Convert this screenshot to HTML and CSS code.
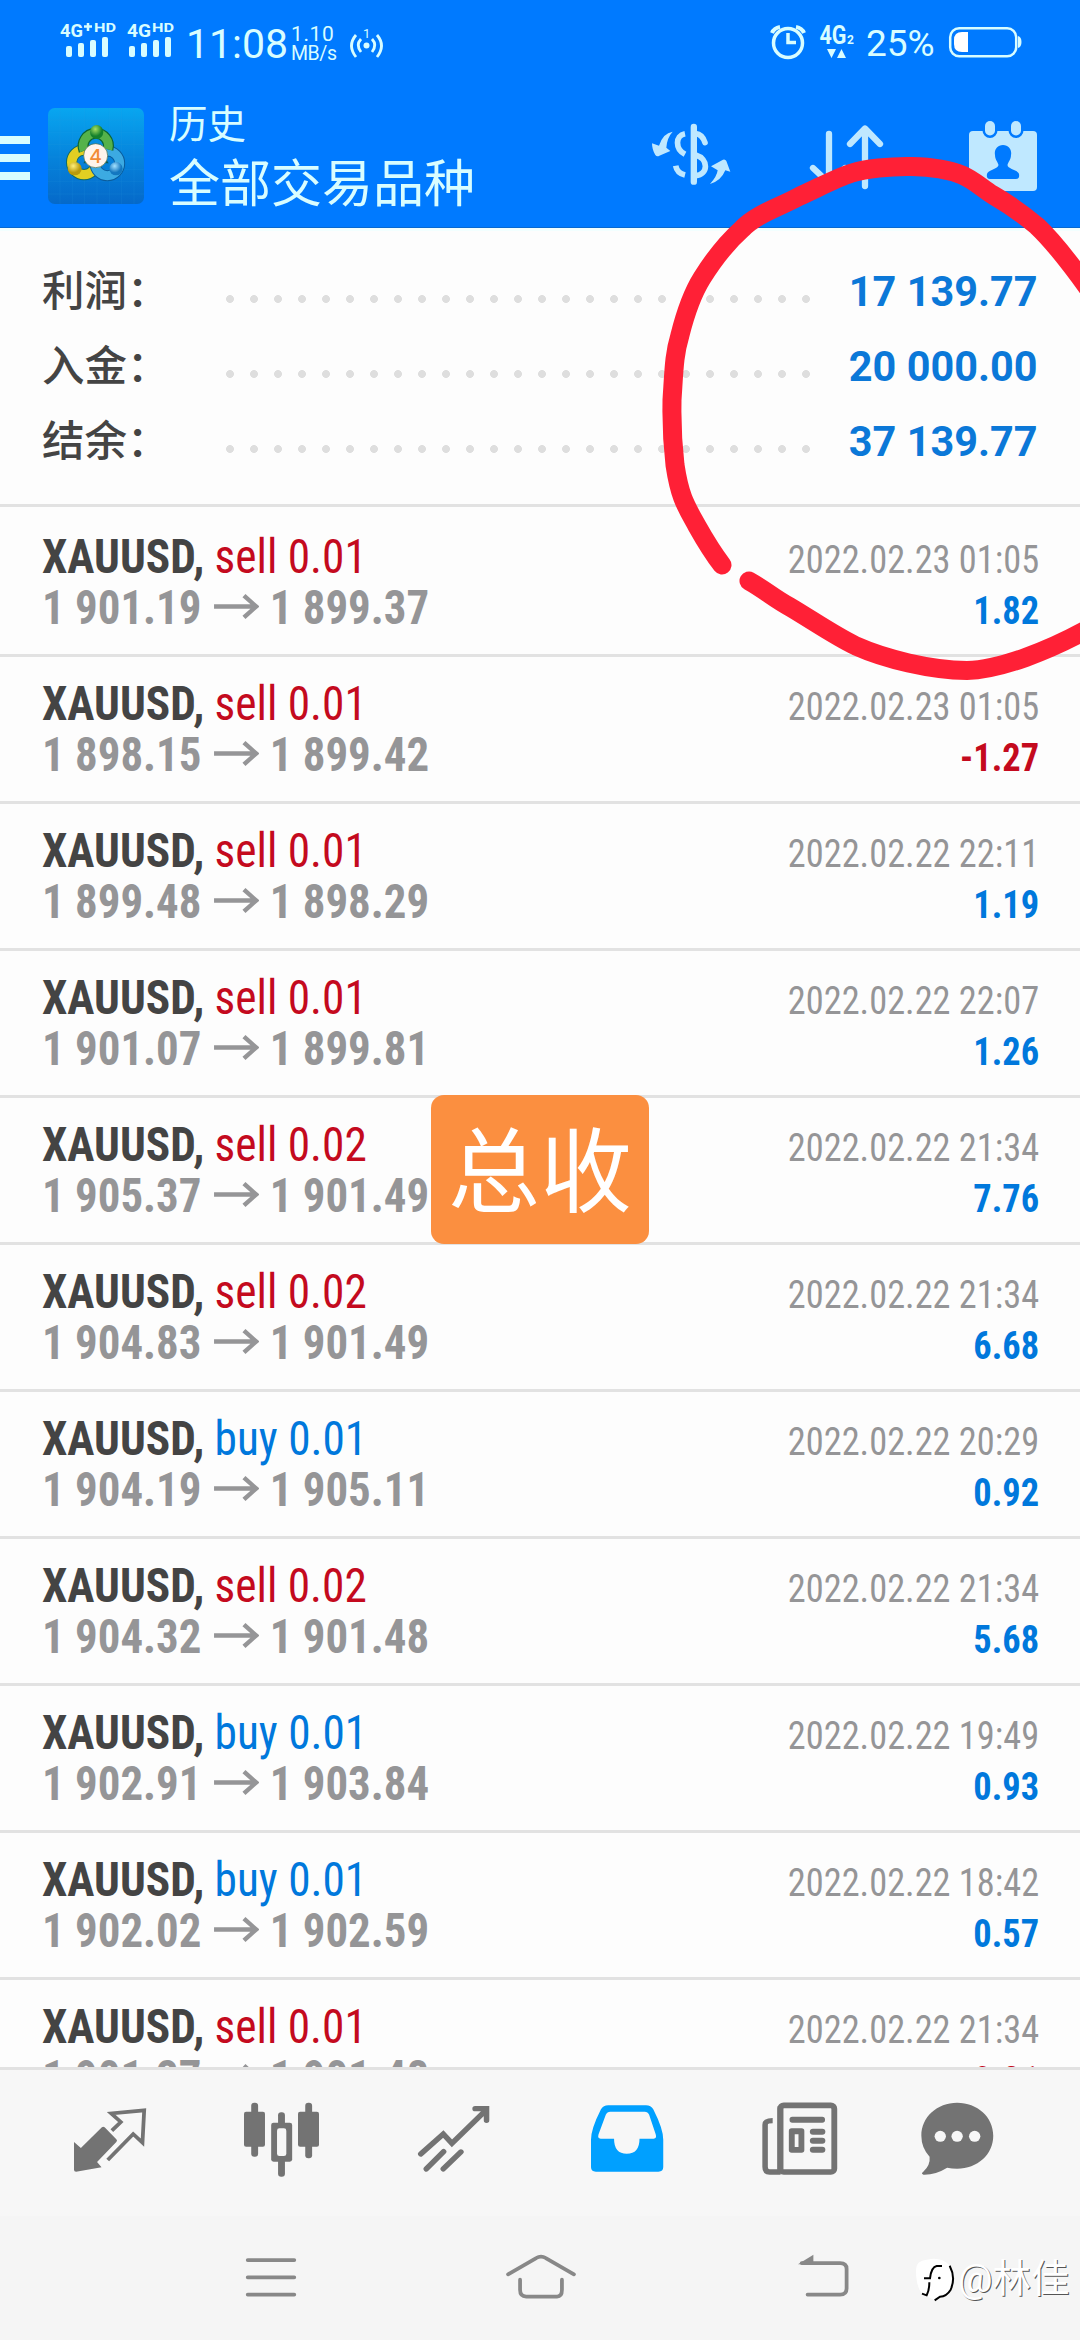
FILE: index.html
```
<!DOCTYPE html>
<html lang="zh-CN">
<head>
<meta charset="utf-8">
<title>历史</title>
<link rel="stylesheet" href="styles.css">
</head>
<body>
<svg class="defs" aria-hidden="true">
  <symbol id="arrow" viewBox="0 0 132 76" preserveAspectRatio="none"><path d="M0 38H120M88 5L124 38L88 71" fill="none" stroke="currentColor" stroke-width="13"/></symbol>
</svg>
<div class="screen">
  <header class="top">
    <div class="status">
      <svg class="sig" width="56" height="38" viewBox="60 21 56 38"><text class="net" x="60" y="37" font-size="19" textLength="23" lengthAdjust="spacingAndGlyphs">4G</text><path d="M84 26.500h8M88 23v8" stroke="currentColor" stroke-width="2.500"/><text class="net" x="94" y="32" font-size="13.500" textLength="22" lengthAdjust="spacingAndGlyphs">HD</text><g fill="currentColor"><rect x="66" y="46" width="6" height="11" rx="2"/><rect x="78" y="43" width="6" height="14" rx="2"/><rect x="90" y="40" width="6" height="17" rx="2"/><rect x="102" y="37" width="6" height="20" rx="2"/></g></svg>
      <svg class="sig two" width="47" height="38" viewBox="127 21 47 38"><text class="net" x="127" y="37" font-size="19" textLength="24" lengthAdjust="spacingAndGlyphs">4G</text><text class="net" x="152" y="32" font-size="13.500" textLength="22" lengthAdjust="spacingAndGlyphs">HD</text><g fill="currentColor"><rect x="129" y="46" width="6" height="11" rx="2"/><rect x="141" y="43" width="6" height="14" rx="2"/><rect x="153" y="40" width="6" height="17" rx="2"/><rect x="165" y="37" width="6" height="20" rx="2"/></g></svg>
      <span class="time">11:08</span>
      <span class="speed"><span>1.10</span><span>MB/s</span></span>
      <svg class="spot" width="34" height="34" viewBox="350 26 34 34"><g fill="none" stroke="currentColor" stroke-width="2.800"><path d="M356 35q-9 10.500 0 22M361 39q-5.500 6 0 13M377 35q9 10.500 0 22M372 39q5.500 6 0 13"/></g><circle cx="366.500" cy="45.500" r="3" fill="currentColor"/><text x="363" y="38" font-size="13" fill="currentColor">1</text></svg>
      <svg class="alarm" width="36" height="36" viewBox="769 24 36 36"><g fill="none" stroke="currentColor"><circle cx="787" cy="43" r="14.500" stroke-width="3.500"/><path d="M787 33v9.500h8" stroke-width="3.500"/><path d="M771 33q2-5 8-6M803 33q-2-5-8-6" stroke-width="4"/></g></svg>
      <svg class="data" width="35" height="35" viewBox="818 24 35 35"><text class="net" x="818.500" y="44" font-size="25" textLength="27" lengthAdjust="spacingAndGlyphs">4G</text><text class="net" x="846" y="44" font-size="12">2</text><path d="M826 49h9l-4.500 9zM836 58h9l-4.500-9z" fill="currentColor"/></svg>
      <span class="pct">25%</span>
      <svg class="bat" width="74" height="32" viewBox="947 26 74 32"><rect x="949.200" y="28.200" width="66" height="28" rx="9" fill="none" stroke="currentColor" stroke-width="2.500"/><path d="M967 32v20h-6q-8 0-8-8v-4q0-8 8-8z" fill="#fff"/><path d="M1017 36q3.500 1 3.500 6t-3.500 6z" fill="currentColor"/></svg>
    </div>
    <div class="bar">
      <div class="burger"><i></i><i></i><i></i></div>
      <svg class="logo" width="96" height="96" viewBox="24 24 288 288">
        <defs>
          <linearGradient id="bg" x1="0" y1="0" x2="0" y2="1"><stop offset="0" stop-color="#08a6f0"/><stop offset=".5" stop-color="#0684dc"/><stop offset="1" stop-color="#0569c9"/></linearGradient>
          <radialGradient id="gr" cx=".4" cy=".3"><stop offset="0" stop-color="#a6e063"/><stop offset="1" stop-color="#14802c"/></radialGradient>
          <radialGradient id="ye" cx=".4" cy=".3"><stop offset="0" stop-color="#fff07a"/><stop offset="1" stop-color="#b99a0c"/></radialGradient>
          <radialGradient id="bl" cx=".4" cy=".3"><stop offset="0" stop-color="#a4e2ff"/><stop offset="1" stop-color="#1377c0"/></radialGradient>
        </defs>
        <rect x="24" y="24" width="288" height="288" rx="20" fill="url(#bg)"/>
        <path d="M60 24v288M97 24v288M134 24v288M171 24v288M208 24v288M245 24v288M282 24v288M24 60h288M24 97h288M24 134h288M24 171h288M24 208h288M24 245h288M24 282h288" stroke="#2b9fe6" stroke-opacity=".22" stroke-width="2"/>
        <path d="M168 130L130 190L206 190z" fill="#0d5c5a"/>
        <g fill="none"><circle cx="132" cy="187" r="37" stroke="#126b62" stroke-width="34"/><circle cx="132" cy="187" r="37" stroke="#e2cf22" stroke-width="28"/><circle cx="202" cy="190" r="37" stroke="#0a5c9c" stroke-width="33"/><circle cx="202" cy="190" r="37" stroke="#3caae2" stroke-width="27"/><path d="M132 152A38 38 0 1 1 204 148" stroke="#0c6533" stroke-width="33"/><path d="M132 152A38 38 0 1 1 204 148" stroke="#55b24a" stroke-width="26"/></g>
        <ellipse cx="170" cy="96" rx="20" ry="21" fill="url(#gr)"/><ellipse cx="104" cy="206" rx="21" ry="20" fill="url(#ye)"/><ellipse cx="228" cy="206" rx="20" ry="20" fill="url(#bl)"/>
        <circle cx="167" cy="167" r="36" fill="#fff4ec" stroke="#4b6b45" stroke-width="2"/><text x="167" y="188" text-anchor="middle" font-family="Inter" font-weight="500" font-size="58" fill="#f28b36">4</text>
      </svg>
      <div class="titles"><span class="t1">历史</span><span class="t2">全部交易品种</span></div>
      <div class="actions">
        <svg width="80" height="63" viewBox="30 38 240 189"><g fill="none" stroke="currentColor" stroke-width="17"><path d="M132 70C102 76 102 116 132 132"/><path d="M104 166Q108 188 132 194" /><path d="M164 70Q184 72 192 97" stroke-linecap="round"/><path d="M164 134C204 146 202 192 164 196"/><path d="M158.500 50V214" stroke-width="19" stroke-linecap="round"/></g><path fill="currentColor" d="M95 64Q66 68 54 106L33 99Q33 118 43 134Q48 140 55 136L88 122L76 112Q78 82 95 64zM207 221Q228 198 230 180L210 168L246 148Q253 146 256 152L268 184L253 180Q240 212 207 221z"/></svg>
        <svg width="74" height="63" viewBox="808 124 74 63"><path d="M828 134V182M812 168L828 183L844 168M864 186V129M849 144L864 128.500L879 144" fill="none" stroke="currentColor" stroke-width="6.300" stroke-linecap="round" stroke-linejoin="round"/></svg>
        <svg width="68" height="70" viewBox="968 120 68 70"><rect x="968" y="130" width="68" height="60" rx="4" fill="currentColor"/><g fill="currentColor" stroke="#007aff" stroke-width="5" paint-order="stroke"><rect x="984" y="120" width="10" height="14.500" rx="5"/><rect x="1010" y="120" width="10" height="14.500" rx="5"/></g><path d="M1002 144c-6 0-9 5-8 10 0 5 3 7 3.500 10 0 4-11 5-11.500 9-.5 3 0 5 3 5h26c3 0 3.500-2 3-5-.5-4-11.500-5-11.500-9 .5-3 3.500-5 3.500-10 1-5-2-10-8-10z" fill="#007aff"/></svg>
      </div>
    </div>
  </header>

  <section class="summary">
    <div><span class="lab">利润：</span><i class="dots"></i><b>17 139.77</b></div>
    <div><span class="lab">入金：</span><i class="dots"></i><b>20 000.00</b></div>
    <div><span class="lab">结余：</span><i class="dots"></i><b>37 139.77</b></div>
  </section>

  <main class="deals">
    <div class="deal"><span class="l"><b>XAUUSD,</b> <em class="sell">sell 0.01</em></span><span class="date">2022.02.23 01:05</span><span class="l px">1 901.19<svg><use href="#arrow"/></svg>1 899.37</span><span class="pl">1.82</span></div>
    <div class="deal"><span class="l"><b>XAUUSD,</b> <em class="sell">sell 0.01</em></span><span class="date">2022.02.23 01:05</span><span class="l px">1 898.15<svg><use href="#arrow"/></svg>1 899.42</span><span class="pl neg">-1.27</span></div>
    <div class="deal"><span class="l"><b>XAUUSD,</b> <em class="sell">sell 0.01</em></span><span class="date">2022.02.22 22:11</span><span class="l px">1 899.48<svg><use href="#arrow"/></svg>1 898.29</span><span class="pl">1.19</span></div>
    <div class="deal"><span class="l"><b>XAUUSD,</b> <em class="sell">sell 0.01</em></span><span class="date">2022.02.22 22:07</span><span class="l px">1 901.07<svg><use href="#arrow"/></svg>1 899.81</span><span class="pl">1.26</span></div>
    <div class="deal"><span class="l"><b>XAUUSD,</b> <em class="sell">sell 0.02</em></span><span class="date">2022.02.22 21:34</span><span class="l px">1 905.37<svg><use href="#arrow"/></svg>1 901.49</span><span class="pl">7.76</span></div>
    <div class="deal"><span class="l"><b>XAUUSD,</b> <em class="sell">sell 0.02</em></span><span class="date">2022.02.22 21:34</span><span class="l px">1 904.83<svg><use href="#arrow"/></svg>1 901.49</span><span class="pl">6.68</span></div>
    <div class="deal"><span class="l"><b>XAUUSD,</b> <em class="buy">buy 0.01</em></span><span class="date">2022.02.22 20:29</span><span class="l px">1 904.19<svg><use href="#arrow"/></svg>1 905.11</span><span class="pl">0.92</span></div>
    <div class="deal"><span class="l"><b>XAUUSD,</b> <em class="sell">sell 0.02</em></span><span class="date">2022.02.22 21:34</span><span class="l px">1 904.32<svg><use href="#arrow"/></svg>1 901.48</span><span class="pl">5.68</span></div>
    <div class="deal"><span class="l"><b>XAUUSD,</b> <em class="buy">buy 0.01</em></span><span class="date">2022.02.22 19:49</span><span class="l px">1 902.91<svg><use href="#arrow"/></svg>1 903.84</span><span class="pl">0.93</span></div>
    <div class="deal"><span class="l"><b>XAUUSD,</b> <em class="buy">buy 0.01</em></span><span class="date">2022.02.22 18:42</span><span class="l px">1 902.02<svg><use href="#arrow"/></svg>1 902.59</span><span class="pl">0.57</span></div>
    <div class="deal"><span class="l"><b>XAUUSD,</b> <em class="sell">sell 0.01</em></span><span class="date">2022.02.22 21:34</span><span class="l px">1 901.27<svg><use href="#arrow"/></svg>1 901.48</span><span class="pl neg">-0.21</span></div>
  </main>

  <nav class="tabs">
    <svg width="72.600" height="73.300" viewBox="215 430 211 220" preserveAspectRatio="none"><path d="M296 503q4-4 8 0l34 36q4 4 0 8l-56 60 13 16-74 13q-6 0-6-6V547l20 18z" fill="currentColor"/><path d="M325 513l26-26-28-26 96-9-5 97-27-26-74 78" fill="none" stroke="currentColor" stroke-width="11"/></svg>
    <svg width="75" height="73.300" viewBox="708 430 218 220" preserveAspectRatio="none"><g fill="currentColor"><rect x="729" y="429" width="20" height="162" rx="9"/><rect x="708" y="456" width="61" height="105" rx="6"/><rect x="886" y="429" width="20" height="167" rx="9"/><rect x="865" y="456" width="61" height="105" rx="6"/><rect x="807" y="458" width="20" height="193" rx="9"/><rect x="787" y="489" width="61" height="117" rx="7"/></g><rect x="804" y="506" width="27" height="83" rx="7" fill="#f7f7f7"/></svg>
    <svg width="72" height="73.300" viewBox="1213 430 208 220" preserveAspectRatio="none"><path d="M1221 583L1286 523L1311 551L1408 453M1378 447H1411V482M1237 628L1287 576M1286 628L1337 577" fill="none" stroke="currentColor" stroke-width="16" stroke-linecap="round" stroke-linejoin="miter"/></svg>
    <svg class="on" width="72.600" height="73.300" viewBox="146 430 211 220" preserveAspectRatio="none"><path fill="currentColor" fill-rule="evenodd" d="M196 437H306Q320 437 327 449Q356 508 356 540V622Q356 636 342 636H160Q146 636 146 622V540Q146 508 175 449Q182 437 196 437zM202 456Q193 456 189 465L168 524Q164 537 174 537H213Q213 582 250 582Q287 582 287 537H328Q338 537 334 524L315 465Q311 456 302 456z"/></svg>
    <svg width="75.400" height="73.300" viewBox="646 430 219 220" preserveAspectRatio="none"><g fill="none" stroke="currentColor"><rect x="699" y="437" width="157" height="200" rx="10" stroke-width="17"/><path d="M677 483Q655 483 655 495V622Q655 637 668 637H700" stroke-width="16"/></g><rect x="691" y="440" width="17" height="200" fill="currentColor"/><g fill="currentColor"><rect x="726" y="471" width="103" height="18" rx="8"/><path fill-rule="evenodd" d="M732 506h29q8 0 8 8v57q0 8-8 8h-29q-8 0-8-8v-57q0-8 8-8zM741 524v38h11v-38z"/><rect x="785" y="507" width="45" height="18" rx="9"/><rect x="785" y="534" width="45" height="18" rx="9"/><rect x="785" y="561" width="45" height="18" rx="9"/></g></svg>
    <svg class="chat" width="72.600" height="73.300" viewBox="1108 430 211 220" preserveAspectRatio="none"><path fill="currentColor" d="M1213 429C1272 429 1318 472 1318 528S1272 627 1213 627Q1198 627 1184 624Q1150 646 1115 645Q1107 642 1114 637Q1136 616 1133 591Q1109 564 1109 528C1109 472 1155 429 1213 429z"/><g fill="#f7f7f7"><circle cx="1164" cy="530" r="16.500"/><circle cx="1213" cy="530" r="16.500"/><circle cx="1264" cy="530" r="16.500"/></g></svg>
  </nav>

  <footer class="sys">
    <svg width="50" height="44" viewBox="714 885 145 130" preserveAspectRatio="none"><path d="M719 900H854M719 951H854M719 1002H854" stroke="currentColor" stroke-width="11" stroke-linecap="round"/></svg>
    <svg class="home" width="70" height="44" viewBox="1469 885 204 130" preserveAspectRatio="none"><path d="M1475 942L1557 894Q1571 885 1585 894L1667 942M1510 958V988Q1510 1008 1528 1008H1618Q1632 1008 1632 988V958" fill="none" stroke="currentColor" stroke-width="11" stroke-linecap="round"/></svg>
    <svg width="51" height="44" viewBox="749 885 149 130" preserveAspectRatio="none"><path d="M760 909H872Q891 909 891 926V984Q891 1002 872 1002H777" fill="none" stroke="currentColor" stroke-width="11" stroke-linecap="round"/><path d="M749 912L794 884V912z" fill="currentColor"/></svg>
  </footer>

  <svg class="ink" width="1080" height="2340" viewBox="0 0 1080 2340"><path d="M722 565C712 552 706 542 697 526C686 506 680 498 675 465C671 430 672 415 672 400C674 370 674 355 680 335C685 315 692 294 702 278C712 262 724 245 742 229C756 214 780 207 800 196C818 188 836 178 852 173C865 169 890 166 912 166.500C935 167 950 170 962 175C974 180 983 189 993 195C1012 206 1025 216 1037 226C1055 243 1070 263 1088 288"/><path d="M749 581C765 590 775 599 790 607C812 620 835 636 856 646C885 659 930 670 967 670.500C1000 670 1050 650 1088 629"/></svg>
  <div class="badge">总收</div>
  <div class="mark"><svg width="42" height="46" viewBox="38 26 126 138"><path d="M44 66Q44 36 76 34Q118 24 144 50Q164 82 148 126Q134 148 100 156L76 144Q44 132 44 66z" fill="#fff"/><path d="M145 52Q164 88 148 124Q136 144 116 145L100 156" fill="none" stroke="#000" stroke-width="6"/><path d="M122 53H106Q90 56 86 90H68M84 102Q84 126 76 141L62 136" fill="none" stroke="#000" stroke-width="6"/><circle cx="114" cy="89" r="4" fill="#000"/></svg><span>@林佳</span></div>
</div>
</body>
</html>
```
FILE: styles.css
```
* { box-sizing: border-box; }
body { margin: 0; background: #fdfdfd; font-family: Roboto, "Noto Sans CJK SC", sans-serif; }
.defs { display: none; }
svg { display: block; flex: none; overflow: visible; }
.screen { position: relative; width: 1080px; height: 2340px; overflow: hidden; display: flex; flex-direction: column; }

.top { height: 228px; flex: none; background: #007aff; color: #d8fdff; display: flex; flex-direction: column; border-bottom: 1px solid #0869d0; }
.status { height: 84px; padding: 0 58px 0 60px; display: flex; align-items: center; }
.net { font-weight: 700; fill: currentColor; }
.sig { margin-top: -4px; }
.two { margin-left: 11px; }
.time { margin-left: 12px; width: 105px; font-size: 41px; line-height: 48px; margin-top: 5px; }
.speed { width: 47px; display: flex; flex-direction: column; font-size: 19.500px; line-height: 20px; margin-top: 4px; letter-spacing: -.4px; }
.speed span:first-child { font-size: 21px; letter-spacing: .6px; }
.spot { margin-left: 12px; margin-top: 2px; }
.alarm { margin-left: auto; }
.data { margin-left: 13px; }
.pct { margin-left: 12px; width: 82px; font-size: 37px; margin-top: 3px; white-space: nowrap; }
.bar { height: 144px; display: flex; padding-right: 43px; }
.burger { width: 30px; padding-top: 52px; display: flex; flex-direction: column; gap: 10px; }
.burger i { height: 8px; background: currentColor; }
.logo { margin: 24px 0 0 18px; }
.titles { margin-left: 25px; display: flex; flex-direction: column; }
.t1 { font-size: 38.500px; line-height: 48px; margin-top: 17px; }
.t2 { font-size: 51px; line-height: 62px; margin-top: 5px; }
.actions { margin-left: auto; display: flex; color: #bfe8ff; padding-top: 37px; }
.actions svg:nth-child(2) { margin: 3px 86px 0 78px; }
.actions svg:nth-child(1) { margin-top: 2px; }

.summary { height: 276px; flex: none; padding: 25px 42px 0 42px; border-top: 3px solid #f2ffff; }
.summary div { height: 75px; display: flex; align-items: center; }
.lab { width: 184px; font-size: 42.500px; font-weight: 500; color: #444; margin-top: -12px; }
.dots { height: 8px; width: 600px; margin-top: 11px; background: radial-gradient(circle at 4px 4px, #dedede 3.600px, transparent 4.200px) 0 0 / 24px 8px; }
.summary b { margin-left: auto; font-size: 42.500px; color: #0b78d8; margin-top: -5px; transform: scaleX(.975); transform-origin: 100% 50%; }

.deals { height: 1563px; flex: none; overflow: hidden; }
.deal { height: 147px; border-top: 3px solid #e2e2e2; padding: 21px 41px 0 42px; display: grid; grid-template-columns: 1fr auto; grid-template-rows: 51px 51px; align-items: baseline; font-stretch: 75%; font-size: 48px; line-height: 51px; white-space: nowrap; }
.deal:first-child { height: 150px; padding-top: 24px; }
.l { transform: scaleX(.944); transform-origin: 0 50%; color: #444; }
.l em { font-style: normal; }
.sell { color: #c40a1e; }
.buy { color: #0078dc; }
.px { color: #959597; font-weight: 700; transform: scaleX(.935); }
.px svg { display: inline-block; width: 48px; height: 25px; margin: 0 12px 0 13px; vertical-align: 5px; }
.date, .pl { font-size: 39.500px; text-align: right; transform: scaleX(.92); transform-origin: 100% 50%; }
.date { color: #959597; }
.pl { font-weight: 700; color: #0078dc; font-size: 39px; transform: scaleX(.935); }
.neg { color: #c40a1e; }

.tabs { height: 149px; flex: none; border-top: 3px solid #e2e2e2; background: #f7f7f7; color: #737373; display: flex; gap: 99px; padding: 33px 0 0 74px; }
.tabs .on { color: #00a0ff; }
.tabs svg:nth-child(2), .tabs svg:nth-child(3) { position: relative; left: -1.500px; }
.tabs .chat { margin-left: -16px; }
.sys { height: 124px; background: #f5f5f5; color: #888; display: flex; padding: 39px 231px 0 246px; }
.sys .home { margin: 0 222px 0 210px; }

.ink { position: absolute; left: 0; top: 0; fill: none; stroke: #ff2036; stroke-width: 19px; stroke-linecap: round; stroke-linejoin: round; }
.badge { position: absolute; left: 431px; top: 1095px; width: 218px; height: 149px; border-radius: 13px; background: #fb8f40; color: #fff; font-size: 92px; line-height: 158px; text-align: center; white-space: nowrap; }
.mark { position: absolute; left: 914px; top: 2257px; display: flex; }
.mark span { margin-left: 2px; font-size: 38.500px; line-height: 44px; color: #fff; text-shadow: 1px 1px 0 #555; white-space: nowrap; }
```
